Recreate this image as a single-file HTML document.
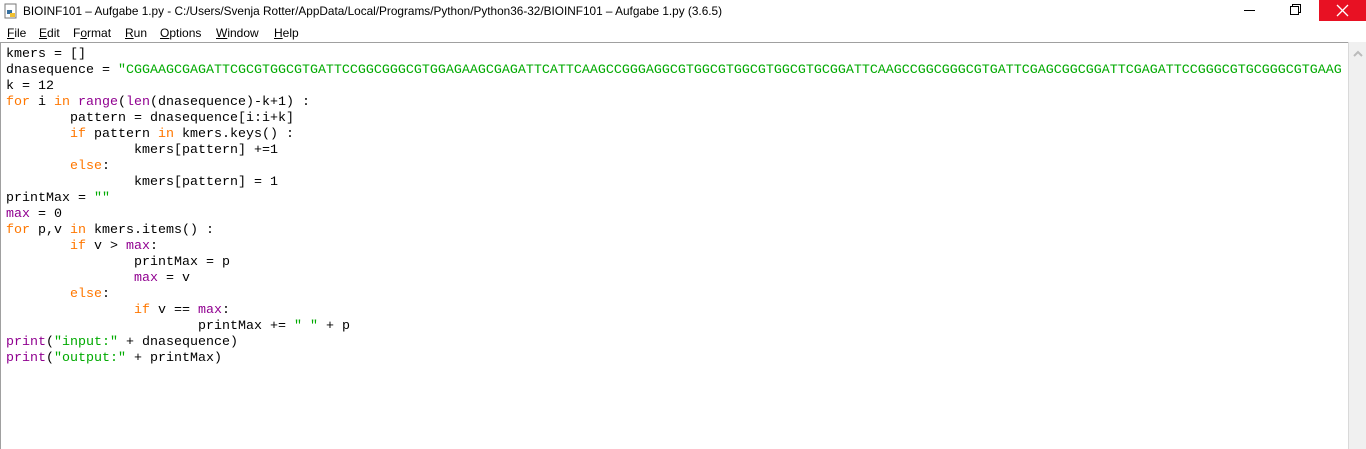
<!DOCTYPE html>
<html><head><meta charset="utf-8"><style>
body{margin:0;width:1366px;height:449px;background:#fff;overflow:hidden;position:relative;font-family:"Liberation Sans",sans-serif}
.title{position:absolute;left:0;top:0;width:1366px;height:24px;background:#fff}
.title .t{position:absolute;left:23px;top:4px;font-size:11.8px;color:#000}
.menu{position:absolute;left:0;top:24px;height:18px;font-size:12px}
.menu span{position:absolute;top:2px;white-space:nowrap}
.menu u{text-decoration:underline}
.close{position:absolute;left:1319px;top:0;width:47px;height:21px;background:#e81123}
.ed{position:absolute;left:0;top:42px;width:1348px;height:407px;border-top:1px solid #a0a0a0;border-left:1px solid #a0a0a0;box-sizing:border-box;overflow:hidden}
.sb{position:absolute;left:1348px;top:42px;width:18px;height:407px;background:#f0f0f0;border-left:1px solid #d9d9d9;box-sizing:border-box}
pre{margin:0;position:absolute;left:5px;top:4px;font-family:"Liberation Mono",monospace;font-size:13.33px;line-height:16px;color:#000;tab-size:8;white-space:pre}
.k{color:#ff7700}.b{color:#900090}.s{color:#00aa00}
</style></head><body>
<div class="title">
<svg style="position:absolute;left:3px;top:3px" width="16" height="16"><rect x="2" y="1" width="11" height="14" fill="#fff" stroke="#777"/><rect x="4" y="7" width="5" height="4" fill="#3670a0"/><rect x="7" y="10" width="5" height="4" fill="#f0c030"/></svg>
<div class="t">BIOINF101 – Aufgabe 1.py - C:/Users/Svenja Rotter/AppData/Local/Programs/Python/Python36-32/BIOINF101 – Aufgabe 1.py (3.6.5)</div>
<div style="position:absolute;left:1244px;top:10px;width:11px;height:1px;background:#000"></div>
<div style="position:absolute;left:1292px;top:4px;width:7px;height:7px;border:1px solid #000"></div>
<div style="position:absolute;left:1290px;top:6px;width:7px;height:7px;border:1px solid #000;background:#fff"></div>
<div class="close"><svg width="47" height="21"><path d="M18 5L29 16M29 5L18 16" stroke="#fff" stroke-width="1.3"/></svg></div>
</div>
<div class="menu">
<span style="left:7px"><u>F</u>ile</span><span style="left:39px"><u>E</u>dit</span><span style="left:73px">F<u>o</u>rmat</span><span style="left:125px"><u>R</u>un</span><span style="left:160px"><u>O</u>ptions</span><span style="left:216px"><u>W</u>indow</span><span style="left:274px"><u>H</u>elp</span>
</div>
<div class="ed"><pre>kmers = []
dnasequence = <span class="s">"CGGAAGCGAGATTCGCGTGGCGTGATTCCGGCGGGCGTGGAGAAGCGAGATTCATTCAAGCCGGGAGGCGTGGCGTGGCGTGGCGTGCGGATTCAAGCCGGCGGGCGTGATTCGAGCGGCGGATTCGAGATTCCGGGCGTGCGGGCGTGAAG</span>
k = 12
<span class="k">for</span> i <span class="k">in</span> <span class="b">range</span>(<span class="b">len</span>(dnasequence)-k+1) :
	pattern = dnasequence[i:i+k]
	<span class="k">if</span> pattern <span class="k">in</span> kmers.keys() :
		kmers[pattern] +=1
	<span class="k">else</span>:
		kmers[pattern] = 1
printMax = <span class="s">""</span>
<span class="b">max</span> = 0
<span class="k">for</span> p,v <span class="k">in</span> kmers.items() :
	<span class="k">if</span> v &gt; <span class="b">max</span>:
		printMax = p
		<span class="b">max</span> = v
	<span class="k">else</span>:
		<span class="k">if</span> v == <span class="b">max</span>:
			printMax += <span class="s">" "</span> + p
<span class="b">print</span>(<span class="s">"input:"</span> + dnasequence)
<span class="b">print</span>(<span class="s">"output:"</span> + printMax)</pre></div>
<div class="sb"><svg width="18" height="18" style="position:absolute;left:0;top:4px"><path d="M5 10L9 6L13 10" stroke="#bbb" stroke-width="2" fill="none"/></svg></div>
</body></html>
